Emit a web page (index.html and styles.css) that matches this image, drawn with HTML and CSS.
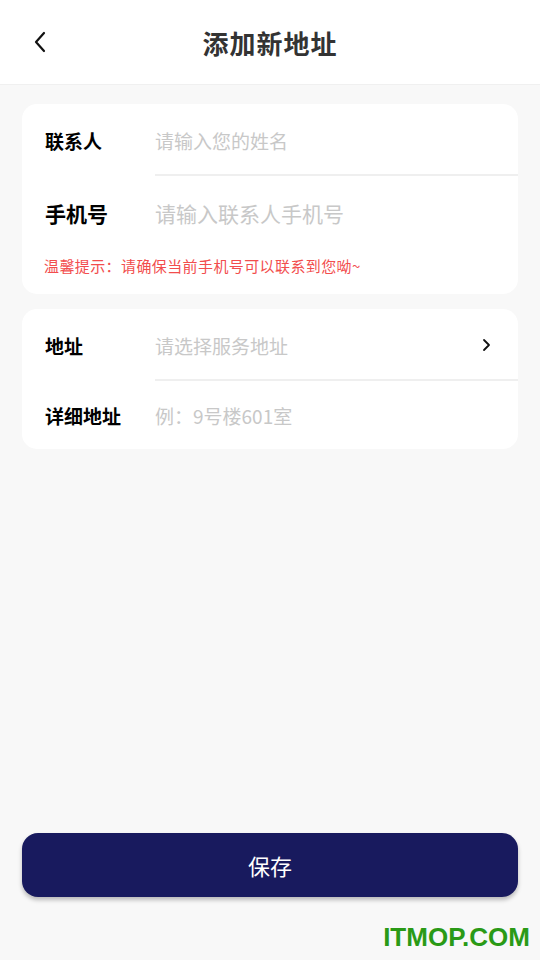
FILE: index.html
```html
<!DOCTYPE html>
<html lang="zh-CN">
<head>
<meta charset="UTF-8">
<meta name="viewport" content="width=device-width, initial-scale=1.0">
<title>添加新地址</title>
<link rel="stylesheet" href="styles.css">
</head>
<body>

<div class="page">
    <div class="header">
        <span class="back">
            <svg width="14" height="22" viewBox="0 0 14 22"><path d="M11 2 L3 11 L11 20" fill="none" stroke="#111" stroke-width="2.2" stroke-linecap="round" stroke-linejoin="round"/></svg>
        </span>
        <h1>添加新地址</h1>
    </div>

    <div class="card">
        <div class="row row-first">
            <span class="label">联系人</span>
            <span class="field">请输入您的姓名</span>
        </div>
        <div class="row row-second">
            <span class="label">手机号</span>
            <span class="field">请输入联系人手机号</span>
        </div>
        <p class="tip">温馨提示：请确保当前手机号可以联系到您呦~</p>
    </div>

    <div class="card card-address">
        <div class="row row-addr">
            <span class="label">地址</span>
            <span class="field">请选择服务地址</span>
            <svg class="arrow" width="10" height="14" viewBox="0 0 10 14"><path d="M3 2 L8 7 L3 12" fill="none" stroke="#111" stroke-width="1.8" stroke-linecap="round" stroke-linejoin="round"/></svg>
        </div>
        <div class="row row-detail">
            <span class="label">详细地址</span>
            <span class="field">例：9号楼601室</span>
        </div>
    </div>

    <div class="footer">
        <button class="save">保存</button>
    </div>

    <div class="watermark">ITMOP.COM</div>
</div>

</body>
</html>
```

FILE: styles.css
```css
body {
    margin: 0;
    padding: 0;
    background-color: #f8f8f8;
    font-family: "Noto Sans CJK SC", "Noto Sans", sans-serif;
    color: #000;
}
.page {
    position: relative;
    min-height: 960px;
    display: flex;
    flex-direction: column;
}
.header {
    height: 84px;
    background-color: #fff;
    border-bottom: 1px solid #f0f0f0;
    display: flex;
    align-items: center;
    justify-content: center;
    position: relative;
}
.back {
    position: absolute;
    left: 33px;
    top: 31px;
}
.header h1 {
    margin: 0;
    font-size: 26px;
    font-weight: bold;
    color: #333;
    letter-spacing: 1px;
}
.card {
    margin: 19px 22px 0;
    background-color: #fff;
    border-radius: 15px;
}
.card-address {
    margin-top: 15px;
}
.row {
    display: flex;
    align-items: center;
    margin-left: 23px;
}
.row-first {
    height: 72px;
}
.row-second {
    height: 79px;
    padding-bottom: 6px;
    box-sizing: border-box;
}
.row-addr {
    height: 72px;
}
.row-detail {
    height: 68px;
}
.label {
    width: 110px;
    flex-shrink: 0;
    font-size: 19px;
    font-weight: bold;
}
.field {
    flex: 1;
    font-size: 19px;
    color: #c8c8c8;
}
.row-second .label,
.row-second .field {
    font-size: 21px;
}
.row-first, .row-addr {
    position: relative;
}
.row-first::after, .row-addr::after {
    content: "";
    position: absolute;
    left: 110px;
    right: 0;
    bottom: 0;
    height: 2px;
    background-color: #efefef;
}
.arrow {
    margin-right: 27px;
}
.tip {
    margin: 0;
    padding: 0 0 17px 22px;
    font-size: 15px;
    line-height: 22px;
    letter-spacing: 0.4px;
    color: #f24d4d;
}
.footer {
    margin-top: auto;
    padding: 0 22px 63px;
}
.save {
    display: block;
    width: 100%;
    height: 64px;
    border: none;
    border-radius: 16px;
    background-color: #181a5e;
    color: #fff;
    font-family: "Noto Sans CJK SC", sans-serif;
    font-size: 22px;
    box-shadow: 0 3px 4px rgba(0, 0, 0, 0.25);
}
.watermark {
    position: absolute;
    right: 10px;
    bottom: 7px;
    font-family: "Liberation Sans", Arial, sans-serif;
    font-weight: bold;
    font-size: 26px;
    color: #2a9a16;
}
```
